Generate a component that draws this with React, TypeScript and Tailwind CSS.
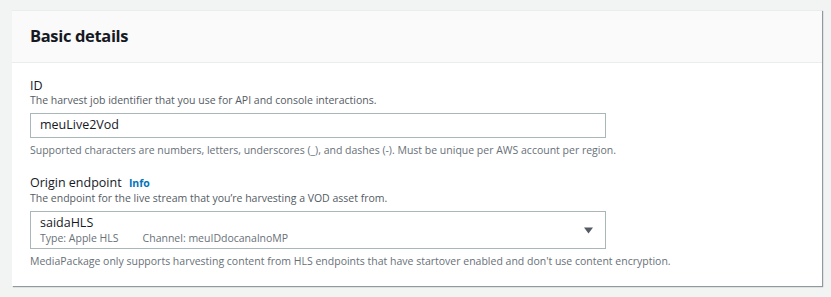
import React from 'react';

const font = { fontFamily: '"Open Sans", "Noto Sans", Arial, sans-serif' };

const Field: React.FC<{ children: React.ReactNode }> = ({ children }) => (
  <div className="flex flex-col">{children}</div>
);

export default function App() {
  return (
    <div className="min-h-[297px] w-[831px] bg-[#f2f3f3] pt-[10px] pl-[12px] text-[#16191f]" style={font}>
      <div className="w-[810px] bg-white shadow-[1px_1px_1px_0_rgba(0,28,36,0.3),1px_1px_1px_0_rgba(0,28,36,0.15)] border-t border-[#eaeded]">
        <div className="h-[52px] bg-[#fafafa] border-b border-[#eaeded] px-[18px] flex items-center">
          <h2 className="text-[16.5px] font-bold leading-none tracking-[-0.35px]">Basic details</h2>
        </div>
        <div className="px-[18px] pt-[15px] pb-[18px] flex flex-col gap-[18px]">
          <Field>
            <label className="text-[12.5px] leading-[15px]">ID</label>
            <p className="text-[10.5px] leading-[14px] text-[#545b64]">
              The harvest job identifier that you use for API and console interactions.
            </p>
            <div className="mt-[6px] w-[576px] h-[25px] border border-[#aab7b8] px-[9px] flex items-center text-[12.5px]">
              meuLive2Vod
            </div>
            <p className="mt-[5px] text-[10.5px] leading-[14px] text-[#687078]">
              Supported characters are numbers, letters, underscores (_), and dashes (-). Must be unique per AWS account per region.
            </p>
          </Field>
          <Field>
            <label className="text-[12.5px] leading-[15px]">
              Origin endpoint <span className="ml-[4px] text-[10.5px] font-bold text-[#0073bb]">Info</span>
            </label>
            <p className="text-[10.5px] leading-[14px] text-[#545b64]">
              The endpoint for the live stream that you’re harvesting a VOD asset from.
            </p>
            <div className="mt-[6px] w-[576px] h-[38px] border border-[#aab7b8] pl-[9px] pr-[12px] flex items-center justify-between">
              <div className="flex flex-col">
                <span className="text-[12.5px] leading-[16px]">saidaHLS</span>
                <span className="text-[10.5px] leading-[15px] text-[#687078]">
                  Type: Apple HLS<span className="ml-[24px]">Channel: meuIDdocanalnoMP</span>
                </span>
              </div>
              <svg width="9" height="7" viewBox="0 0 9 7">
                <path d="M0 0.5h9l-4.5 6z" fill="#545b64" />
              </svg>
            </div>
            <p className="mt-[5px] text-[10.5px] leading-[14px] text-[#687078]">
              MediaPackage only supports harvesting content from HLS endpoints that have startover enabled and don't use content encryption.
            </p>
          </Field>
        </div>
      </div>
    </div>
  );
}
